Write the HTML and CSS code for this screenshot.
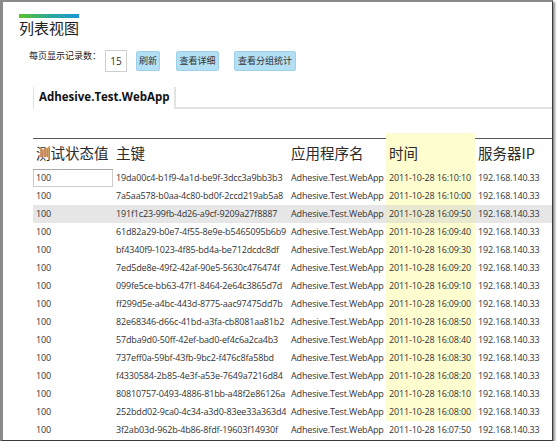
FILE: index.html
```html
<!DOCTYPE html>
<html lang="zh-CN">
<head>
<meta charset="utf-8">
<title>列表视图</title>
<link rel="stylesheet" href="styles.css">
</head>
<body>
<div class="frame">
  <div class="brand-bar"></div>
  <h1 class="title">列表视图</h1>
  <div class="toolbar">
    <span class="label">每页显示记录数：</span>
    <span class="page-size">15</span>
    <button class="btn btn-refresh">刷新</button>
    <button class="btn btn-detail">查看详细</button>
    <button class="btn btn-group">查看分组统计</button>
  </div>
  <div class="tabs">
    <div class="tab">Adhesive.Test.WebApp</div>
    <div class="tab-rest"></div>
  </div>
  <table class="grid">
    <colgroup>
      <col class="c-status"><col class="c-key"><col class="c-app"><col class="c-time"><col class="c-ip">
    </colgroup>
    <tr class="spacer"><td></td><td></td><td></td><td class="time"></td><td></td></tr>
    <tr class="head">
      <th>测试状态值</th><th>主键</th><th>应用程序名</th><th class="time">时间</th><th>服务器IP</th>
    </tr>
    <tr><td class="focus">100</td><td>19da00c4-b1f9-4a1d-be9f-3dcc3a9bb3b3</td><td>Adhesive.Test.WebApp</td><td class="time">2011-10-28 16:10:10</td><td>192.168.140.33</td></tr>
    <tr><td>100</td><td>7a5aa578-b0aa-4c80-bd0f-2ccd219ab5a8</td><td>Adhesive.Test.WebApp</td><td class="time">2011-10-28 16:10:00</td><td>192.168.140.33</td></tr>
    <tr class="selected"><td>100</td><td>191f1c23-99fb-4d26-a9cf-9209a27f8887</td><td>Adhesive.Test.WebApp</td><td class="time">2011-10-28 16:09:50</td><td>192.168.140.33</td></tr>
    <tr><td>100</td><td>61d82a29-b0e7-4f55-8e9e-b5465095b6b9</td><td>Adhesive.Test.WebApp</td><td class="time">2011-10-28 16:09:40</td><td>192.168.140.33</td></tr>
    <tr><td>100</td><td>bf4340f9-1023-4f85-bd4a-be712dcdc8df</td><td>Adhesive.Test.WebApp</td><td class="time">2011-10-28 16:09:30</td><td>192.168.140.33</td></tr>
    <tr><td>100</td><td>7ed5de8e-49f2-42af-90e5-5630c476474f</td><td>Adhesive.Test.WebApp</td><td class="time">2011-10-28 16:09:20</td><td>192.168.140.33</td></tr>
    <tr><td>100</td><td>099fe5ce-bb63-47f1-8464-2e64c3865d7d</td><td>Adhesive.Test.WebApp</td><td class="time">2011-10-28 16:09:10</td><td>192.168.140.33</td></tr>
    <tr><td>100</td><td>ff299d5e-a4bc-443d-8775-aac97475dd7b</td><td>Adhesive.Test.WebApp</td><td class="time">2011-10-28 16:09:00</td><td>192.168.140.33</td></tr>
    <tr><td>100</td><td>82e68346-d66c-41bd-a3fa-cb8081aa81b2</td><td>Adhesive.Test.WebApp</td><td class="time">2011-10-28 16:08:50</td><td>192.168.140.33</td></tr>
    <tr><td>100</td><td>57dba9d0-50ff-42ef-bad0-ef4c6a2ca4b3</td><td>Adhesive.Test.WebApp</td><td class="time">2011-10-28 16:08:40</td><td>192.168.140.33</td></tr>
    <tr><td>100</td><td>737eff0a-59bf-43fb-9bc2-f476c8fa58bd</td><td>Adhesive.Test.WebApp</td><td class="time">2011-10-28 16:08:30</td><td>192.168.140.33</td></tr>
    <tr><td>100</td><td>f4330584-2b85-4e3f-a53e-7649a7216d84</td><td>Adhesive.Test.WebApp</td><td class="time">2011-10-28 16:08:20</td><td>192.168.140.33</td></tr>
    <tr><td>100</td><td>80810757-0493-4886-81bb-a48f2e86126a</td><td>Adhesive.Test.WebApp</td><td class="time">2011-10-28 16:08:10</td><td>192.168.140.33</td></tr>
    <tr><td>100</td><td>252bdd02-9ca0-4c34-a3d0-83ee33a363d4</td><td>Adhesive.Test.WebApp</td><td class="time">2011-10-28 16:08:00</td><td>192.168.140.33</td></tr>
    <tr><td>100</td><td>3f2ab03d-962b-4b86-8fdf-19603f14930f</td><td>Adhesive.Test.WebApp</td><td>2011-10-28 16:07:50</td><td>192.168.140.33</td></tr>
  </table>
</div>
</body>
</html>
```

FILE: styles.css
```css
html, body {
  margin: 0;
  padding: 0;
  background: #ffffff;
}

body {
  font-family: "Open Sans", "Noto Sans CJK SC", sans-serif;
  color: #222;
}

.frame {
  width: 549px;
  height: 438px;
  border-style: solid;
  border-width: 2px 1px 1px 3px;
  border-color: #8a8a8a #3a3a3a #3a3a3a #8a8a8a;
  box-shadow: 2px 2px 2px rgba(0, 0, 0, 0.45);
  background: #fff;
  overflow: hidden;
}

.brand-bar {
  width: 60px;
  height: 4px;
  margin: 12px 0 0 16px;
  background: linear-gradient(to right, #5cc22a, #2aa6a0 55%, #1a96d8);
}

.title {
  margin: 0 0 0 16px;
  font-family: "Noto Sans CJK SC", sans-serif;
  font-weight: normal;
  font-size: 15px;
  line-height: 20px;
  color: #222;
}

.toolbar {
  display: flex;
  align-items: flex-start;
  margin: 12px 0 0 26px;
  height: 22px;
}

.label {
  font-family: "Noto Sans CJK SC", sans-serif;
  font-size: 9px;
  line-height: 12px;
  margin-top: 0;
  color: #222;
}

.page-size {
  box-sizing: border-box;
  width: 22px;
  height: 22px;
  margin-left: 4px;
  border: 1px solid #cfcfcf;
  font-size: 10px;
  line-height: 20px;
  text-align: center;
  color: #333;
}

.btn {
  box-sizing: border-box;
  height: 20px;
  margin-top: 1px;
  padding: 0;
  border: 1px solid #9fd0ea;
  border-radius: 2px;
  background: #b2dff4;
  font-family: "Noto Sans CJK SC", sans-serif;
  font-size: 9px;
  line-height: 18px;
  color: #333;
}

.btn-refresh { width: 24px; margin-left: 9px; }
.btn-detail { width: 43px; margin-left: 16px; }
.btn-group { width: 62px; margin-left: 15px; }

.tabs {
  display: flex;
  margin: 15px 0 0 30px;
  height: 22px;
}

.tab {
  box-sizing: border-box;
  width: 143px;
  height: 22px;
  padding-left: 5px;
  border-left: 1px solid #e2e2e2;
  border-right: 2px solid #e2e2e2;
  font-size: 11.5px;
  font-weight: bold;
  line-height: 20px;
  color: #111;
  letter-spacing: 0;
}

.tab-rest {
  flex: 1;
  border-bottom: 2px solid #e2e2e2;
}

.grid {
  margin: 24px 0 0 30px;
  border-collapse: collapse;
  table-layout: fixed;
  width: 532px;
}

.c-status { width: 80px; }
.c-key { width: 175px; }
.c-app { width: 98px; }
.c-time { width: 89px; }
.c-ip { width: 90px; }

.grid td,
.grid th {
  padding: 0 0 0 3px;
  white-space: nowrap;
  overflow: hidden;
}

.grid td {
  height: 18px;
  font-size: 9px;
  letter-spacing: -0.15px;
  line-height: 18px;
  color: #333;
}

.grid .spacer td {
  height: 5px;
  padding: 0;
  font-size: 0;
  line-height: 0;
}

.head th {
  height: 27px;
  border-top: 1px solid #5a5a5a;
  font-family: "Noto Sans CJK SC", sans-serif;
  font-size: 14.5px;
  font-weight: normal;
  text-align: left;
  color: #2a2a2a;
  line-height: 20px;
  padding-top: 0;
  padding-bottom: 3px;
}

.head th.time {
  border-top-color: #fdfdd0;
}

.grid .time {
  background: #fdfdd0;
}

.grid tr.selected td {
  background: #e6e6e6;
}

.grid tr.selected td.time {
  background: #e8e8cf;
}

.grid td.focus {
  box-shadow: inset 0 1px 0 #a8a8a8, inset 0 0 0 1px #cccccc;
}
```
